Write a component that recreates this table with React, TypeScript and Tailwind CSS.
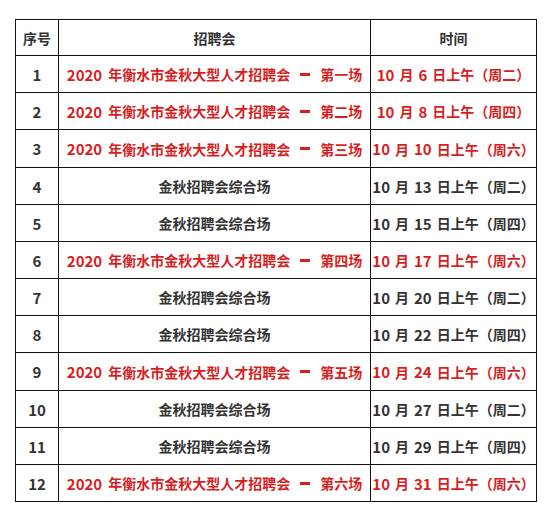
import React from "react";

type Row = { n: number; place?: string; date: [string, string, string]; red: boolean; h: string };

const rows: Row[] = [
  { n: 1, place: "第一场", date: ["10", "6", "二"], red: true, h: "h-[36px]" },
  { n: 2, place: "第二场", date: ["10", "8", "四"], red: true, h: "h-[36px]" },
  { n: 3, place: "第三场", date: ["10", "10", "六"], red: true, h: "h-[37px]" },
  { n: 4, date: ["10", "13", "二"], red: false, h: "h-[36px]" },
  { n: 5, date: ["10", "15", "四"], red: false, h: "h-[36px]" },
  { n: 6, place: "第四场", date: ["10", "17", "六"], red: true, h: "h-[36px]" },
  { n: 7, date: ["10", "20", "二"], red: false, h: "h-[36px]" },
  { n: 8, date: ["10", "22", "四"], red: false, h: "h-[36px]" },
  { n: 9, place: "第五场", date: ["10", "24", "六"], red: true, h: "h-[37px]" },
  { n: 10, date: ["10", "27", "二"], red: false, h: "h-[36px]" },
  { n: 11, date: ["10", "29", "四"], red: false, h: "h-[36px]" },
  { n: 12, place: "第六场", date: ["10", "31", "六"], red: true, h: "h-[36px]" },
];

const font = { fontFamily: '"Noto Sans CJK SC", "Noto Sans", sans-serif' };

function Name({ place }: { place?: string }) {
  if (!place) return <span className="whitespace-nowrap">金秋招聘会综合场</span>;
  return (
    <span className="flex items-center whitespace-nowrap">
      <span className="text-[15px]">2020</span>
      <span className="ml-[6px]">年衡水市金秋大型人才招聘会</span>
      <span className="mx-[10px] inline-block w-[10px] h-[3px] bg-current shrink-0"></span>
      <span>{place}</span>
    </span>
  );
}

function DateText({ d }: { d: [string, string, string] }) {
  return (
    <span className="flex items-center whitespace-nowrap">
      <span className="text-[15px]">{d[0]}</span>
      <span className="ml-[5px]">月</span>
      <span className="ml-[5px] text-[15px]">{d[1]}</span>
      <span className="ml-[5px]">日上午（周{d[2]}）</span>
    </span>
  );
}

export default function App() {
  return (
    <div className="w-[556px] h-[516px] bg-white pl-[15px] pt-[19px]" style={font}>
      <div className="inline-grid grid-cols-[42px_311px_165px] gap-px bg-[#111] p-px text-[14px] font-bold leading-none">
        <div className="h-[35px] bg-white flex items-center justify-center text-[#333]">序号</div>
        <div className="h-[35px] bg-white flex items-center justify-center text-[#333]">招聘会</div>
        <div className="h-[35px] bg-white flex items-center justify-center text-[#333]">时间</div>
        {rows.map((r) => (
          <React.Fragment key={r.n}>
            <div className={`${r.h} bg-white flex items-center justify-center text-[15px] text-[#333]`}>{r.n}</div>
            <div className={`${r.h} bg-white flex items-center justify-center ${r.red ? "text-[#d81e1e]" : "text-[#333]"}`}>
              <Name place={r.place} />
            </div>
            <div className={`${r.h} bg-white flex items-center justify-center ${r.red ? "text-[#d81e1e]" : "text-[#333]"}`}>
              <DateText d={r.date} />
            </div>
          </React.Fragment>
        ))}
      </div>
    </div>
  );
}
